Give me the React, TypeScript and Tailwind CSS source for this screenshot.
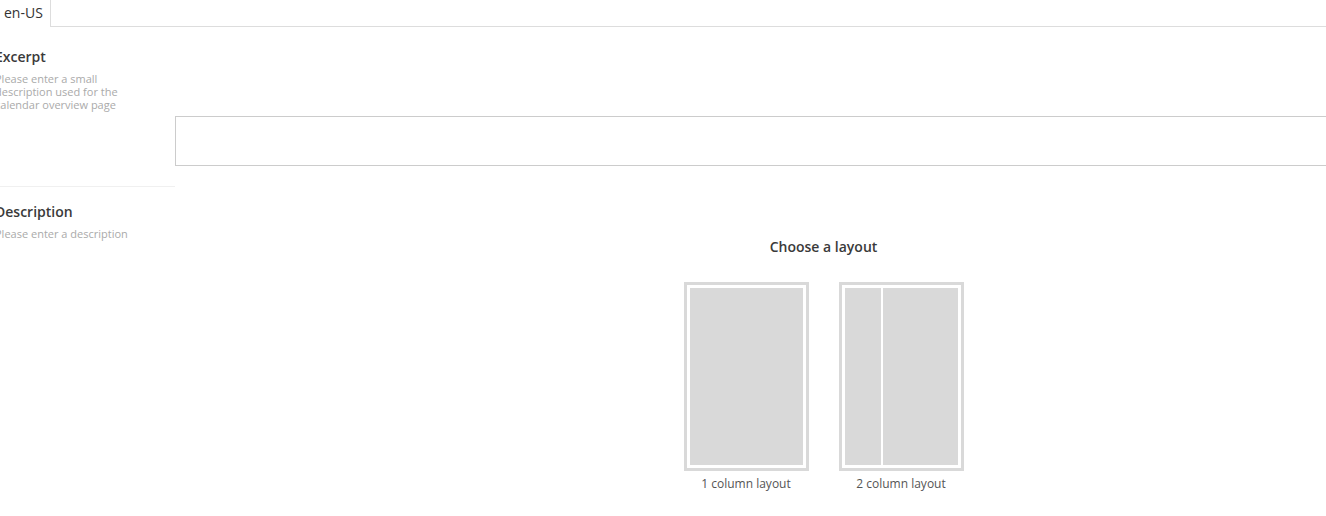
export default function App() {
  return (
    <div className="w-full h-[516px] overflow-hidden bg-white font-['Open_Sans',sans-serif]">
      <div className="-ml-[5px] w-[1477px]">
        <div className="flex h-[27px]">
          <div className="h-[27px] pl-[9px] pr-[7px] border-r border-[#dddddd] text-[14px] leading-[26px] text-[#333333]">
            en-US
          </div>
          <div className="flex-1 border-b border-[#dddddd]" />
        </div>

        <div className="flex">
          <div className="w-[180px] h-[160px] pt-[20px] border-b border-[#f0f0f0]">
            <div className="text-[14px] leading-[20px] font-semibold text-[#3a3a3a]">Excerpt</div>
            <div className="mt-[5px] w-[130px] text-[11px] leading-[13px] text-[#aaaaaa]">
              Please enter a small description used for the calendar overview page
            </div>
          </div>
          <div className="flex-1 pt-[89px]">
            <div className="h-[50px] border border-[#cccccc]" />
          </div>
        </div>

        <div className="flex">
          <div className="w-[180px] pt-[15px]">
            <div className="text-[14px] leading-[20px] font-semibold text-[#3a3a3a]">Description</div>
            <div className="mt-[5px] text-[11px] leading-[13px] text-[#aaaaaa]">
              Please enter a description
            </div>
          </div>
          <div className="flex-1 flex flex-col items-center pt-[50px]">
            <div className="text-[14px] leading-[20px] font-semibold text-[#3a3a3a]">Choose a layout</div>
            <div className="mt-[25px] flex gap-[30px]">
              <div className="flex flex-col items-center">
                <div className="w-[125px] h-[189px] border-[3px] border-[#d9d9d9] p-[3px] flex">
                  <div className="flex-1 bg-[#d9d9d9]" />
                </div>
                <div className="mt-[5px] text-[12px] leading-[16px] text-[#555555]">1 column layout</div>
              </div>
              <div className="flex flex-col items-center">
                <div className="w-[125px] h-[189px] border-[3px] border-[#d9d9d9] p-[3px] flex gap-[2px]">
                  <div className="w-[36px] bg-[#d9d9d9]" />
                  <div className="flex-1 bg-[#d9d9d9]" />
                </div>
                <div className="mt-[5px] text-[12px] leading-[16px] text-[#555555]">2 column layout</div>
              </div>
            </div>
          </div>
        </div>
      </div>
    </div>
  )
}
